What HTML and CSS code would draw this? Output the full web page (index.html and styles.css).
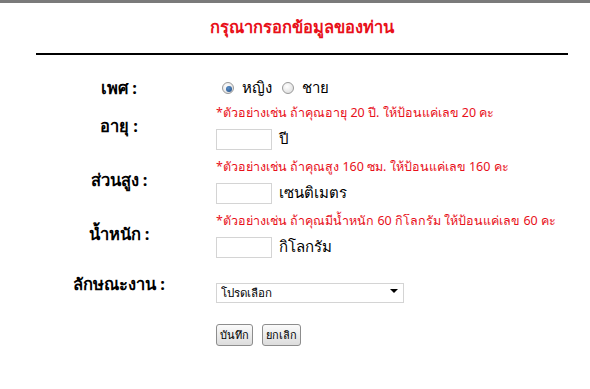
FILE: index.html
```html
<!DOCTYPE html>
<html lang="th">
<head>
  <meta charset="UTF-8" />
  <title>กรอกข้อมูล</title>
  <link rel="stylesheet" href="styles.css">
</head>
<body>
  <div class="page">
    <h2 class="title">กรุณากรอกข้อมูลของท่าน</h2>
    <hr class="line" />
    <table class="form-table">
      <tr class="row-sex">
        <td class="label">เพศ :</td>
        <td class="field">
          <label class="radio"><input type="radio" name="sex" checked /> หญิง</label>
          <label class="radio"><input type="radio" name="sex" /> ชาย</label>
        </td>
      </tr>
      <tr>
        <td class="label">อายุ :</td>
        <td class="field">
          <div class="hint">*ตัวอย่างเช่น ถ้าคุณอายุ 20 ปี. ให้ป้อนแค่เลข 20 คะ</div>
          <div class="entry"><input type="text" class="box" /> <span class="unit">ปี</span></div>
        </td>
      </tr>
      <tr>
        <td class="label">ส่วนสูง :</td>
        <td class="field">
          <div class="hint">*ตัวอย่างเช่น ถ้าคุณสูง 160 ซม. ให้ป้อนแค่เลข 160 คะ</div>
          <div class="entry"><input type="text" class="box" /> <span class="unit">เซนติเมตร</span></div>
        </td>
      </tr>
      <tr>
        <td class="label">น้ำหนัก :</td>
        <td class="field">
          <div class="hint">*ตัวอย่างเช่น ถ้าคุณมีน้ำหนัก 60 กิโลกรัม ให้ป้อนแค่เลข 60 คะ</div>
          <div class="entry"><input type="text" class="box" /> <span class="unit">กิโลกรัม</span></div>
        </td>
      </tr>
      <tr class="row-job">
        <td class="label">ลักษณะงาน :</td>
        <td class="field">
          <span class="select-wrap">
            <select class="job">
              <option>โปรดเลือก</option>
            </select>
          </span>
        </td>
      </tr>
      <tr class="row-buttons">
        <td></td>
        <td class="field">
          <button type="button" class="btn">บันทึก</button>
          <button type="button" class="btn">ยกเลิก</button>
        </td>
      </tr>
    </table>
  </div>
</body>
</html>
```

FILE: styles.css
```css
body {
  margin: 0;
  font-family: Tahoma, "Noto Sans", "DejaVu Sans", sans-serif;
  background-color: white;
  color: black;
  border-top: 3px solid #7a7a7a;
}

.page {
  width: 532px;
  margin: 0 0 0 36px;
}

.title {
  margin: 0;
  padding-top: 11px;
  height: 31px;
  text-align: center;
  font-size: 16.5px;
  font-weight: bold;
  color: #e8101a;
}

.line {
  margin: 8px 0 0;
  border: none;
  border-top: 2px solid black;
  height: 0;
}

.form-table {
  border-collapse: collapse;
  margin-top: 20px;
}

.form-table td {
  padding: 0;
}

.label {
  width: 166px;
  text-align: center;
  font-size: 16.5px;
  font-weight: bold;
  vertical-align: middle;
  padding-bottom: 4px !important;
}

.row-sex .label {
  padding-bottom: 0 !important;
}

.field {
  padding-left: 14px !important;
  font-size: 15px;
}

.row-sex td {
  height: 26px;
}

.radio input {
  appearance: none;
  width: 12px;
  height: 12px;
  margin: 0 4px 0 6px;
  border: 1px solid #9a9a9a;
  border-radius: 50%;
  background: radial-gradient(circle at 40% 35%, #ffffff, #d8d8d8);
  vertical-align: -1px;
  position: relative;
}

.radio input:checked::after {
  content: "";
  position: absolute;
  left: 3px;
  top: 3px;
  width: 6px;
  height: 6px;
  border-radius: 50%;
  background: radial-gradient(circle at 40% 35%, #5b8fc8, #1d4a82);
}

.hint {
  color: #e8101a;
  font-size: 12.5px;
  height: 24px;
  line-height: 20px;
  margin-top: 2px;
}

.entry {
  height: 28px;
}

.box {
  width: 52px;
  height: 17px;
  border: 1px solid #d4d4d4;
  padding: 1px;
  vertical-align: middle;
}

.unit {
  margin-left: 3px;
  vertical-align: middle;
}

.row-job td {
  height: 46px;
  vertical-align: middle;
}

.row-job .label {
  vertical-align: top;
  padding-top: 8px;
}

.select-wrap {
  position: relative;
  display: inline-block;
}

.select-wrap::after {
  content: "";
  position: absolute;
  right: 6px;
  top: 8px;
  border-left: 4px solid transparent;
  border-right: 4px solid transparent;
  border-top: 4px solid black;
  pointer-events: none;
}

.job {
  appearance: none;
  width: 188px;
  height: 20px;
  padding: 0 4px;
  font-size: 11.5px;
  font-family: Tahoma, "Noto Sans", "DejaVu Sans", sans-serif;
  border: 1px solid #d4d4d4;
  background: white;
  vertical-align: middle;
}

.row-buttons td {
  padding-top: 2px;
}

.btn {
  font-size: 11px;
  font-family: Tahoma, "Noto Sans", "DejaVu Sans", sans-serif;
  height: 22px;
  padding: 0 3px;
  margin-right: 5px;
  border: 1px solid #8d8d8d;
  border-radius: 3px;
  background: linear-gradient(#fafafa, #dcdcdc);
}
```
